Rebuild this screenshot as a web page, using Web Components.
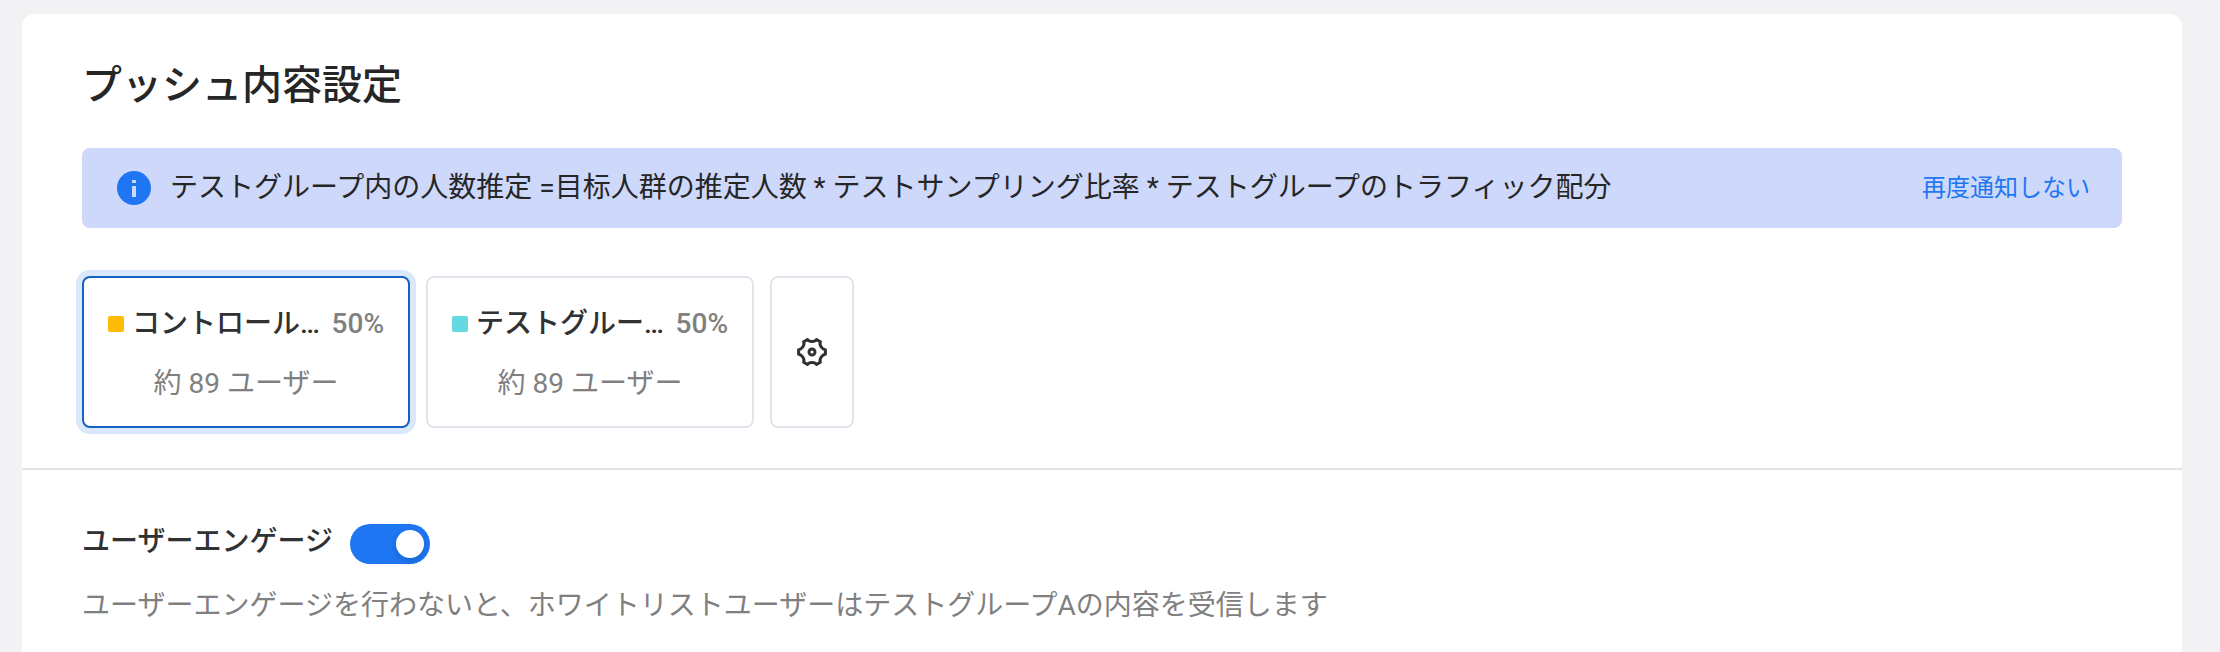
<!DOCTYPE html>
<html lang="ja">
<head>
<meta charset="utf-8">
<meta name="viewport" content="width=device-width, initial-scale=1">
<title>プッシュ内容設定</title>
<style>
  html { background: #f2f2f4; }
  body {
    margin: 0;
    font-family: Roboto, "Noto Sans CJK JP", sans-serif;
    font-size: 28px;
    line-height: 40px;
    color: #262626;
    --primary: #1f76f2;
    --muted: #808080;
    --line: #e1e5ed;
  }
</style>
</head>
<body>
<push-settings-page></push-settings-page>

<template id="page-template">
  <style>
    :host { display: flex; flex-direction: column; box-sizing: border-box; min-height: 100vh; padding: 14px 38px 0 22px; }
    main { flex: 1; background: #fff; border-radius: 12px 12px 0 0; }
    .content { padding: 44px 60px 40px; }
    h1 { margin: 0 0 34px; font-size: 40px; line-height: 56px; font-weight: 500; }
    .groups { display: flex; flex-wrap: wrap; gap: 16px; margin-top: 48px; }
    .engage { padding: 52px 60px 24px; border-top: 2px solid #e1e5ea; }
  </style>
  <main>
    <section class="content">
      <h1>プッシュ内容設定</h1>
      <info-banner>テストグループ内の人数推定 =目标人群の推定人数 * テストサンプリング比率 * テストグループのトラフィック配分<span slot="action">再度通知しない</span></info-banner>
      <div class="groups">
        <group-card selected style="--swatch: #ffbb05"><span slot="name">コントロール…</span><span slot="share">50%</span>約 89 ユーザー</group-card>
        <group-card style="--swatch: #65d8e2"><span slot="name">テストグルー…</span><span slot="share">50%</span>約 89 ユーザー</group-card>
        <settings-button></settings-button>
      </div>
    </section>
    <section class="engage">
      <toggle-field>ユーザーエンゲージ<span slot="help">ユーザーエンゲージを行わないと、ホワイトリストユーザーはテストグループAの内容を受信します</span></toggle-field>
    </section>
  </main>
</template>

<template id="banner-template">
  <style>
    :host { display: flex; align-items: center; box-sizing: border-box; min-height: 80px; padding: 20px 32px 20px 35px; border-radius: 8px; background: #ced8fb; }
    svg { flex: none; width: 34px; height: 34px; margin-right: 19px; }
    p { flex: 1; margin: 0; }
    a { color: var(--primary); font-size: 24px; text-decoration: none; white-space: nowrap; }
  </style>
  <svg viewBox="0 0 34 34" aria-hidden="true"><circle cx="17" cy="17" r="17" fill="#1f76f2"/><path d="M15 9h4v3h-4zM15 15h4v11h-4z" fill="#ced8fb"/></svg>
  <p><slot></slot></p>
  <a href="#"><slot name="action"></slot></a>
</template>

<template id="group-template">
  <style>
    :host { display: block; width: 328px; }
    button { display: block; width: 100%; height: 152px; box-sizing: border-box; margin: 0; padding: 4px 24px 0; border: 2px solid var(--line); border-radius: 8px; background: #fff; font: inherit; color: var(--muted); cursor: pointer; }
    :host([selected]) button { border-color: #195fc5; box-shadow: 0 0 0 6px #dae8fc; }
    .head { display: flex; align-items: center; margin-bottom: 20px; font-weight: 500; }
    .swatch { flex: none; width: 16px; height: 16px; margin-right: 8px; border-radius: 2px; background: var(--swatch); }
    .name { flex: 1; white-space: nowrap; text-align: left; color: #303133; }
    .count { display: block; }
  </style>
  <button type="button">
    <span class="head"><span class="swatch"></span><span class="name"><slot name="name"></slot></span><span class="share"><slot name="share"></slot></span></span>
    <span class="count"><slot></slot></span>
  </button>
</template>

<template id="settings-template">
  <style>
    :host { display: block; width: 84px; }
    button { display: flex; align-items: center; justify-content: center; width: 100%; height: 152px; box-sizing: border-box; margin: 0; padding: 0; border: 2px solid var(--line); border-radius: 8px; background: #fff; cursor: pointer; }
    svg { width: 32px; height: 32px; }
  </style>
  <button type="button" aria-label="グループ設定">
    <svg viewBox="0 0 32 32" fill="none" stroke="#303133" stroke-width="3" stroke-linejoin="round"><path d="M11.5 3.6C13 6.2 19 6.2 20.5 3.6L24.4 5.8C23 8.8 26 13.4 29.4 13.8V18.2C26 18.6 23 23.2 24.4 26.2L20.5 28.4C19 25.8 13 25.8 11.5 28.4L7.6 26.2C9 23.2 6 18.6 2.6 18.2V13.8C6 13.4 9 8.8 7.6 5.8Z"/><circle cx="16" cy="16" r="3"/></svg>
  </button>
</template>

<template id="toggle-template">
  <style>
    :host { display: block; }
    .row { display: flex; align-items: flex-start; gap: 17px; }
    label { font-weight: 500; color: #303133; }
    input { appearance: none; display: flex; align-items: center; justify-content: flex-start; box-sizing: border-box; width: 80px; height: 40px; margin: 2px 0 0; padding: 0 6px; border-radius: 20px; background: #b8bdc7; cursor: pointer; }
    input::before { content: ""; width: 28px; height: 28px; border-radius: 50%; background: #fff; box-shadow: 0 3px 6px #00235033; }
    input:checked { background: var(--primary); justify-content: flex-end; }
    p { margin: 22px 0 0; color: var(--muted); }
  </style>
  <div class="row"><label for="toggle"><slot></slot></label><input id="toggle" type="checkbox" role="switch" aria-describedby="help" checked></div>
  <p id="help"><slot name="help"></slot></p>
</template>

<script>
  class TemplateElement extends HTMLElement {
    constructor() {
      super();
      const template = document.getElementById(this.constructor.template);
      this.attachShadow({ mode: "open" }).append(template.content.cloneNode(true));
    }
  }

  customElements.define("info-banner", class extends TemplateElement {
    static template = "banner-template";
  });

  customElements.define("group-card", class extends TemplateElement {
    static template = "group-template";
    static observedAttributes = ["selected"];
    connectedCallback() {
      this.update();
      this.shadowRoot.querySelector("button").onclick = () => {
        for (const card of this.parentElement.querySelectorAll("group-card")) {
          card.toggleAttribute("selected", card === this);
        }
      };
    }
    attributeChangedCallback() { this.update(); }
    update() {
      this.shadowRoot.querySelector("button").setAttribute("aria-pressed", this.hasAttribute("selected"));
    }
  });

  customElements.define("settings-button", class extends TemplateElement {
    static template = "settings-template";
  });

  customElements.define("toggle-field", class extends TemplateElement {
    static template = "toggle-template";
  });

  customElements.define("push-settings-page", class extends TemplateElement {
    static template = "page-template";
  });
</script>
</body>
</html>
